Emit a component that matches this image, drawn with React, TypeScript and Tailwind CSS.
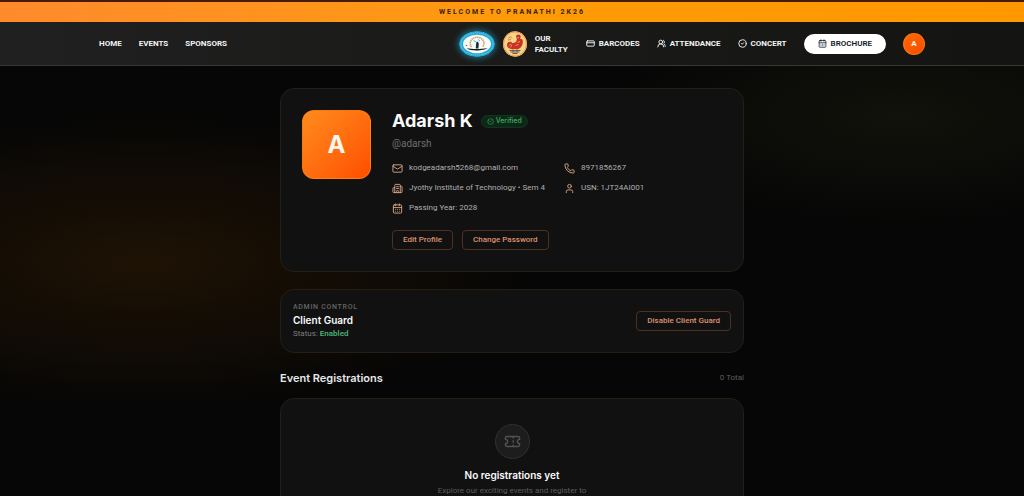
import type { ReactNode } from "react";
import {
  BadgeCheck,
  Building2,
  CalendarDays,
  CircleCheck,
  CreditCard,
  Mail,
  Phone,
  Ticket,
  User,
  UsersRound,
} from "lucide-react";

const leftLinks = ["Home", "Events", "Sponsors"];

const rightLinks = [
  { label: "Barcodes", icon: <CreditCard size={9} strokeWidth={2.5} /> },
  { label: "Attendance", icon: <UsersRound size={9} strokeWidth={2.5} /> },
  { label: "Concert", icon: <CircleCheck size={9} strokeWidth={2.5} /> },
];

function InstituteLogo() {
  return (
    <svg
      viewBox="0 0 36 26"
      className="h-[26px] w-9 shrink-0 rounded-[50%] shadow-[0_0_6px_1px_rgba(34,190,230,0.55)]"
      role="img"
      aria-label="Jyothy Institute of Technology"
    >
      <ellipse cx="18" cy="13" rx="18" ry="13" fill="#27a9d6" />
      <ellipse
        cx="18"
        cy="13"
        rx="16"
        ry="11"
        fill="none"
        stroke="#7fd3ee"
        strokeWidth="1"
        strokeDasharray="1 1"
      />
      <ellipse cx="18" cy="13" rx="14" ry="9.2" fill="#f7fbfa" />
      <path
        d="M12.5 16C9.500 12 12 6.500 18 6.200C24 6.500 27 12 23.500 16"
        fill="none"
        stroke="#d39a5f"
        strokeWidth="1.600"
        strokeDasharray="1.400 .6"
      />
      <path d="M14.500 9.500l3 1.500M19 8.500l2 1.500" stroke="#5bb4d8" strokeWidth="1" />
      <path d="M17.200 11.500l1.800-1 .8 2.500-.4 4.500h-2.600z" fill="#172c3d" />
      <path d="M7.500 17.300c6 1 15 1 21-.3-3 3-17 3.500-21 .3z" fill="#101c1c" />
      <circle cx="7.500" cy="14.500" r=".8" fill="#c65040" />
    </svg>
  );
}

function FestLogo() {
  return (
    <svg
      viewBox="0 0 24 26"
      className="h-[26px] w-6 shrink-0"
      role="img"
      aria-label="Pranathi"
    >
      <ellipse cx="12" cy="13" rx="12" ry="12.7" fill="#f8d487" />
      <ellipse
        cx="12"
        cy="13"
        rx="11.4"
        ry="12.1"
        fill="none"
        stroke="#f0954c"
        strokeWidth="1"
      />
      <path
        d="M13 5.500c0-2.500 4.500-3 4.800.5l-1 1.500 2.700 1c1 3-.2 8-4 9.500H9c-4-.3-6-3-4.500-6 1.500-2 4.500-1.500 5 .3l3.500-1.300 1-2.500z"
        fill="#ca3127"
      />
      <path
        d="M6.500 14.500c0-1.500 2-1.500 2 0s-1.500 1.500-1.500 1.500M12.500 14.500l3-1M14 6.500l2 .5M17 10.500l-2.500 1"
        fill="none"
        stroke="#f5b066"
        strokeWidth=".8"
      />
      <path d="M5 7.500l2.500-2 1.500 2M5 9l3-.5" fill="none" stroke="#d2793a" strokeWidth=".9" />
      <path
        d="M6.500 19.500h11M7.500 21h9M9.500 22.500h5M10 18.300v3M14 18.300v3"
        fill="none"
        stroke="#715a50"
        strokeWidth="1"
      />
    </svg>
  );
}

function NavBar() {
  return (
    <header className="border-b border-[#373836] bg-linear-to-r from-[#202020] to-[#141412]">
      <nav className="mx-auto flex h-[43px] w-full max-w-[826px] items-center justify-between text-[8px] font-bold uppercase text-gray-100">
        <div className="flex items-center gap-[17px]">
          {leftLinks.map((label) => (
            <a key={label} href={`#${label.toLowerCase()}`}>
              {label}
            </a>
          ))}
        </div>
        <div className="flex items-center gap-[17px]">
          <div className="flex items-center gap-2">
            <InstituteLogo />
            <FestLogo />
            <a href="#faculty" className="w-[34px] leading-[11px]">
              Our Faculty
            </a>
          </div>
          {rightLinks.map((link) => (
            <a
              key={link.label}
              href={`#${link.label.toLowerCase()}`}
              className="flex items-center gap-1"
            >
              {link.icon}
              {link.label}
            </a>
          ))}
          <button className="flex h-5 items-center gap-1 rounded-full bg-white px-3.5 font-semibold uppercase text-gray-900">
            <CalendarDays size={9} />
            Brochure
          </button>
          <button className="size-[22px] rounded-full border border-orange-400/60 bg-linear-to-br from-orange-500 to-orange-600 text-orange-50">
            A
          </button>
        </div>
      </nav>
    </header>
  );
}

function Card({ className, children }: { className: string; children: ReactNode }) {
  return (
    <section className={`rounded-[14px] border border-[#261d15] bg-[#111111] ${className}`}>
      {children}
    </section>
  );
}

function InfoItem({ icon, children }: { icon: ReactNode; children: ReactNode }) {
  return (
    <div className="flex items-center gap-1.5 whitespace-nowrap">
      <span className="shrink-0 text-[#d9a685]">{icon}</span>
      {children}
    </div>
  );
}

function OutlineButton({ children }: { children: ReactNode }) {
  return (
    <button className="h-5 rounded-[4px] border border-[#4d3020] px-2.5 text-[8px] font-medium text-[#dd9270]">
      {children}
    </button>
  );
}

function ProfileCard() {
  return (
    <Card className="flex items-start gap-[21px] p-[21px]">
      <div className="flex size-[69px] shrink-0 items-center justify-center rounded-[12px] border border-orange-400/60 bg-linear-to-br from-[#ff8a1c] to-[#ff4d00] font-[Inter,sans-serif] text-2xl font-bold text-orange-50">
        A
      </div>
      <div className="min-w-0 flex-1">
        <div className="flex items-center gap-2">
          <h1 className="font-[Inter,sans-serif] text-lg leading-[22px] font-bold text-gray-50">
            Adarsh K
          </h1>
          <span className="flex h-[13px] items-center gap-0.5 rounded-full border border-[#12351f] bg-[#0d2817] px-[5px] font-[Inter,sans-serif] text-[7px] font-medium text-[#3fae68]">
            <BadgeCheck size={7} />
            Verified
          </span>
        </div>
        <p className="mt-1 text-[10px] leading-4 text-[#6f6f6f]">@adarsh</p>
        <div className="mt-2.5 grid grid-cols-2 gap-x-3.5 gap-y-2 text-[8px] leading-3 text-[#b0b0b0]">
          <InfoItem icon={<Mail size={11} />}>kodgeadarsh5268@gmail.com</InfoItem>
          <InfoItem icon={<Phone size={11} />}>8971856267</InfoItem>
          <InfoItem icon={<Building2 size={11} />}>
            Jyothy Institute of Technology • Sem 4
          </InfoItem>
          <InfoItem icon={<User size={11} />}>USN: 1JT24AI001</InfoItem>
          <InfoItem icon={<CalendarDays size={11} />}>Passing Year: 2028</InfoItem>
        </div>
        <div className="mt-4 flex gap-[9px]">
          <OutlineButton>Edit Profile</OutlineButton>
          <OutlineButton>Change Password</OutlineButton>
        </div>
      </div>
    </Card>
  );
}

export default function App() {
  return (
    <div className="min-h-screen border-t-2 border-[#481a0c] bg-[#060606] bg-[radial-gradient(ellipse_400px_150px_at_14%_50%,#1e1204,transparent),radial-gradient(ellipse_300px_110px_at_88%_22%,#11120b,transparent)] font-[Roboto,sans-serif]">
      <div className="flex h-5 items-center justify-center bg-linear-to-r from-[#ff8a2b] via-[#ff9a08] to-[#ff9800] text-[7px] font-bold tracking-[2px] text-[#3a2008] uppercase">
        Welcome to Pranathi 2K26
      </div>
      <NavBar />
      <main className="mx-auto mt-[22px] w-full max-w-[464px]">
        <ProfileCard />
        <Card className="mt-[17px] flex items-center justify-between p-3">
          <div>
            <p className="text-[7px] leading-[10px] font-medium tracking-widest text-[#666666] uppercase">
              Admin Control
            </p>
            <h2 className="mt-px font-[Inter,sans-serif] text-[10px] leading-[14px] font-semibold text-gray-50">
              Client Guard
            </h2>
            <p className="mt-px text-[8px] leading-3 text-[#7d7d7d]">
              Status: <span className="font-semibold text-[#46b277]">Enabled</span>
            </p>
          </div>
          <OutlineButton>Disable Client Guard</OutlineButton>
        </Card>
        <div className="mt-[17px] flex items-center justify-between">
          <h2 className="font-[Inter,sans-serif] text-[11px] leading-4 font-semibold text-gray-200">
            Event Registrations
          </h2>
          <span className="text-[8px] text-[#5c5c5c]">0 Total</span>
        </div>
        <Card className="mt-3 flex flex-col items-center px-6 pt-[25px] pb-6 text-center">
          <span className="flex size-[35px] items-center justify-center rounded-full border border-[#303030] bg-[#1d1d1d] text-[#525252]">
            <Ticket size={17} />
          </span>
          <h3 className="mt-2 font-[Inter,sans-serif] text-[10px] leading-4 font-semibold text-gray-50">
            No registrations yet
          </h3>
          <p className="mt-0.5 text-[8px] leading-3 text-[#5c5c5c]">
            Explore our exciting events and register to
          </p>
        </Card>
      </main>
    </div>
  );
}
